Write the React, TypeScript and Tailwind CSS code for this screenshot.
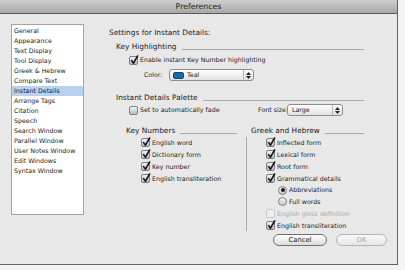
import React from 'react';

const FONT = { fontFamily: '"DejaVu Sans", "Liberation Sans", sans-serif' };

const panes = [
  'General',
  'Appearance',
  'Text Display',
  'Tool Display',
  'Greek & Hebrew',
  'Compare Text',
  'Instant Details',
  'Arrange Tags',
  'Citation',
  'Speech',
  'Search Window',
  'Parallel Window',
  'User Notes Window',
  'Edit Windows',
  'Syntax Window',
];

function Checkbox({ checked = false, disabled = false }: { checked?: boolean; disabled?: boolean }) {
  return (
    <span
      className={
        'relative inline-block w-[9px] h-[9px] shrink-0 rounded-[2px] border ' +
        (disabled
          ? 'border-[#c9c9c9] bg-[#eeeeee]'
          : 'border-[#7f7f7f] bg-gradient-to-b from-[#f1f3f6] to-[#b3bdcb]')
      }
    >
      {checked && (
        <svg className="absolute left-[0px] top-[-2px]" width="9" height="10" viewBox="0 0 9 10">
          <path d="M1.6 5.6 L3.5 8.2 L7.6 1" fill="none" stroke="#161616" strokeWidth="1.6" strokeLinecap="round" strokeLinejoin="round" />
        </svg>
      )}
    </span>
  );
}

function Radio({ selected = false }: { selected?: boolean }) {
  return (
    <span className="relative inline-flex items-center justify-center w-[9px] h-[9px] shrink-0 rounded-full border border-[#7f7f7f] bg-gradient-to-b from-[#f4f4f4] to-[#c9c9c9]">
      {selected && <span className="w-[4px] h-[4px] rounded-full bg-[#1c1c1c]" />}
    </span>
  );
}

function CheckRow({ label, checked, disabled }: { label: string; checked?: boolean; disabled?: boolean }) {
  return (
    <div className="flex items-center h-[11.8px] gap-[2px]">
      <Checkbox checked={checked} disabled={disabled} />
      <span className={disabled ? 'text-[#a9a9a9]' : 'text-[#1b1b1b]'}>{label}</span>
    </div>
  );
}

function Stepper() {
  return (
    <span className="flex flex-col items-center justify-center gap-[1px] w-[10px] h-full border-l border-[#b5b5b5]">
      <svg width="5" height="3" viewBox="0 0 5 3">
        <path d="M0 3 L2.5 0 L5 3 Z" fill="#222" />
      </svg>
      <svg width="5" height="3" viewBox="0 0 5 3">
        <path d="M0 0 L2.5 3 L5 0 Z" fill="#222" />
      </svg>
    </span>
  );
}

function SectionTitle({ text }: { text: string }) {
  return (
    <div className="flex items-center h-[10px] text-[7.4px] text-[#1b1b1b]">
      <span className="whitespace-nowrap">{text}</span>
      <span className="flex-1 ml-[5px] mt-[4px] border-t border-[#a9a9a9]" />
    </div>
  );
}

export default function App() {
  return (
    <div className="w-[405px] h-[270px] bg-[#f3f3f3] overflow-hidden" style={FONT}>
      <div className="w-[398px] h-[265px] flex flex-col bg-[#e8e8e8] border-r border-b border-[#5d646c]">
        {/* title bar */}
        <div className="h-[14px] shrink-0 flex items-center justify-center bg-gradient-to-b from-[#d0d0d0] to-[#a7a7a7] border-b border-[#5a5a5a] text-[7.8px] text-[#1e1e1e]">
          Preferences
        </div>

        <div className="flex">
          {/* pane list */}
          <div className="ml-[11px] mt-[10px] w-[73px] h-[191px] border border-[#a4a4a4] bg-white pt-[1px] text-[6.3px] text-[#1b1b1b]">
            {panes.map((p) => (
              <div
                key={p}
                className={'h-[10px] leading-[10px] pl-[2px] ' + (p === 'Instant Details' ? 'bg-[#b7d1f1]' : '')}
              >
                {p}
              </div>
            ))}
          </div>

          {/* settings */}
          <div className="ml-[25px] w-[278px] text-[6.3px]">
            <div className="mt-[14px] h-[10px] leading-[10px] text-[7.4px] text-[#1b1b1b]">
              Settings for Instant Details:
            </div>

            <div className="mt-[4px] pl-[7px] pr-[23px]">
              <SectionTitle text="Key Highlighting" />
            </div>

            <div className="mt-[3px] pl-[20px] h-[10px] flex items-center gap-[2px]">
              <Checkbox checked />
              <span className="text-[#1b1b1b]">Enable instant Key Number highlighting</span>
            </div>

            <div className="mt-[4px] pl-[35px] h-[12px] flex items-center">
              <span className="text-[#1b1b1b] w-[23px]">Color:</span>
              <div className="ml-[2px] w-[85px] h-[12px] flex items-center rounded-[3px] border border-[#8d8d8d] bg-gradient-to-b from-white to-[#e2e2e2]">
                <span className="ml-[3px] w-[11px] h-[7px] rounded-[2px] bg-[#1c6aa6] border border-[#104a7a]" />
                <span className="ml-[3px] flex-1 text-[#1b1b1b]">Teal</span>
                <Stepper />
              </div>
            </div>

            <div className="mt-[12px] pl-[7px] pr-[23px]">
              <SectionTitle text="Instant Details Palette" />
            </div>

            <div className="mt-[1px] h-[12px] flex items-center">
              <div className="pl-[20px] flex items-center gap-[2px] w-[149px] shrink-0">
                <Checkbox />
                <span className="text-[#1b1b1b] whitespace-nowrap">Set to automatically fade</span>
              </div>
              <span className="text-[#1b1b1b] w-[29px] shrink-0 whitespace-nowrap">Font size:</span>
              <div className="w-[56px] h-[12px] shrink-0 flex items-center rounded-[3px] border border-[#8d8d8d] bg-gradient-to-b from-white to-[#e2e2e2]">
                <span className="ml-[4px] flex-1 text-[#1b1b1b]">Large</span>
                <Stepper />
              </div>
            </div>

            <div className="mt-[10px] flex">
              <div className="w-[137px] pl-[17px] pr-[9px]">
                <SectionTitle text="Key Numbers" />
                <div className="pl-[15px] mt-[1px]">
                  <CheckRow label="English word" checked />
                  <CheckRow label="Dictionary form" checked />
                  <CheckRow label="Key number" checked />
                  <CheckRow label="English transliteration" checked />
                </div>
              </div>

              <div className="w-[118px]">
                <div className="pl-[5px]">
                  <SectionTitle text="Greek and Hebrew" />
                </div>
                <div className="mt-[1px] border-l border-[#a9a9a9] pl-[19px]">
                  <CheckRow label="Inflected form" checked />
                  <CheckRow label="Lexical form" checked />
                  <CheckRow label="Root form" checked />
                  <CheckRow label="Grammatical details" checked />
                  <div className="flex items-center h-[11.8px] gap-[2px] pl-[12px]">
                    <Radio selected />
                    <span className="text-[#1b1b1b]">Abbreviations</span>
                  </div>
                  <div className="flex items-center h-[11.8px] gap-[2px] pl-[12px]">
                    <Radio />
                    <span className="text-[#1b1b1b]">Full words</span>
                  </div>
                  <CheckRow label="English gloss definition" disabled />
                  <CheckRow label="English transliteration" checked />
                </div>
              </div>
            </div>

            <div className="mt-[3px] flex justify-end gap-[9px]">
              <button className="w-[54px] h-[12px] flex items-center justify-center rounded-full border border-[#6f6f6f] bg-gradient-to-b from-white to-[#dcdcdc] text-[6.8px] text-[#111]">
                Cancel
              </button>
              <button className="w-[51px] h-[12px] flex items-center justify-center rounded-full border border-[#b4b4b4] bg-gradient-to-b from-[#fafafa] to-[#e6e6e6] text-[6.8px] text-[#a3a3a3]">
                OK
              </button>
            </div>
          </div>
        </div>
      </div>
    </div>
  );
}
